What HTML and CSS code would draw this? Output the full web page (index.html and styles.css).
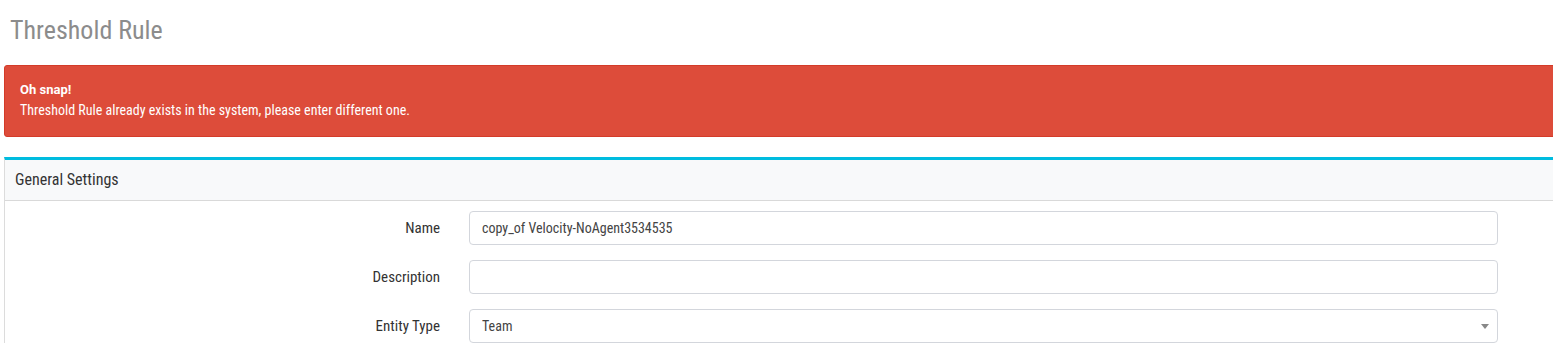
FILE: index.html
```html
<!DOCTYPE html>
<html lang="en">
<head>
    <meta charset="UTF-8">
    <title>Threshold Rule</title>
    <link rel="stylesheet" href="styles.css">
</head>
<body>
    <div class="page">
        <h1 class="page-title">Threshold Rule</h1>

        <div class="alert alert-danger">
            <strong>Oh snap!</strong>
            <div>Threshold Rule already exists in the system, please enter different one.</div>
        </div>

        <div class="panel">
            <div class="panel-heading">General Settings</div>
            <div class="panel-body">
                <div class="form-row">
                    <label for="name">Name</label>
                    <input type="text" id="name" class="form-control" value="copy_of Velocity-NoAgent3534535">
                </div>
                <div class="form-row">
                    <label for="description">Description</label>
                    <input type="text" id="description" class="form-control" value="">
                </div>
                <div class="form-row">
                    <label for="entityType">Entity Type</label>
                    <div class="select-wrap">
                        <select id="entityType" class="form-control">
                            <option>Team</option>
                        </select>
                        <span class="caret"></span>
                    </div>
                </div>
            </div>
        </div>
    </div>
</body>
</html>
```

FILE: styles.css
```css
html, body {
    margin: 0;
    padding: 0;
    overflow: hidden;
    background-color: #fff;
}
body {
    font-family: 'Roboto Condensed', 'Roboto', sans-serif;
    font-stretch: 75%;
    font-size: 14px;
    color: #333;
}
.page {
    width: 1600px;
    padding: 0 0 0 4px;
}
.page-title {
    margin: 0;
    padding: 14px 0 0 6px;
    height: 51px;
    box-sizing: border-box;
    font-size: 26px;
    font-weight: 400;
    color: #8c8c8c;
    line-height: 32px;
}
.alert {
    margin-top: 14px;
    height: 72px;
    box-sizing: border-box;
    padding: 14px 15px;
    border: 1px solid #d33b29;
    border-radius: 3px;
    background-color: #dd4c3a;
    color: #fff;
    line-height: 20px;
}
.alert strong {
    display: block;
    font-family: 'Roboto', sans-serif;
    font-stretch: normal;
    font-size: 13px;
    font-weight: 700;
}
.panel {
    margin-top: 20px;
    border-top: 3px solid #00bcdf;
    border-left: 1px solid #dcdcdc;
}
.panel-heading {
    height: 41px;
    box-sizing: border-box;
    padding: 0 10px;
    background-color: #f8f9fa;
    border-bottom: 1px solid #d9d9d9;
    font-size: 16px;
    line-height: 40px;
    color: #333;
}
.panel-body {
    padding: 10px 0 0 0;
}
.form-row {
    display: flex;
    align-items: center;
    height: 34px;
    margin-bottom: 15px;
}
.form-row label {
    width: 435px;
    text-align: right;
    font-size: 15px;
    color: #333;
    margin-right: 29px;
}
.form-control {
    width: 1029px;
    height: 34px;
    box-sizing: border-box;
    padding: 0 12px;
    border: 1px solid #d3d6dc;
    border-radius: 4px;
    background-color: #fff;
    font-family: inherit;
    font-stretch: 75%;
    font-size: 14px;
    color: #444;
}
.select-wrap {
    position: relative;
}
select.form-control {
    -webkit-appearance: none;
    appearance: none;
}
.caret {
    position: absolute;
    right: 9px;
    top: 15px;
    width: 0;
    height: 0;
    border-left: 4px solid transparent;
    border-right: 4px solid transparent;
    border-top: 5px solid #888;
}
```
